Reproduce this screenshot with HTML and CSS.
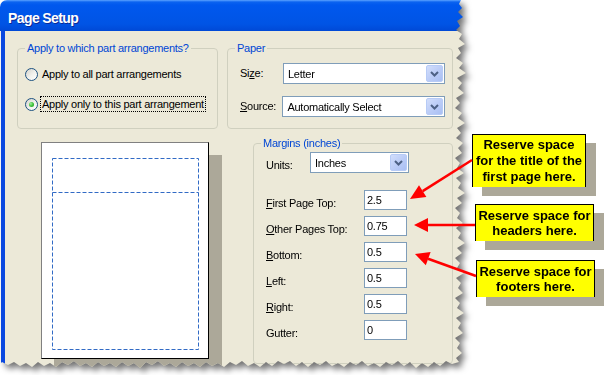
FILE: index.html
```html
<!DOCTYPE html>
<html lang="en">
<head>
  <meta charset="UTF-8" />
  <meta name="viewport" content="width=device-width, initial-scale=1.0"/>
  <title>Page Setup</title>
  <link rel="stylesheet" href="styles.css">
</head>
<body>
  <div class="shot">
    <div class="dialog-wrap">
      <div class="dialog">
        <div class="titlebar">Page Setup</div>

        <div class="dialog-body">
          <div class="top-row">
            <fieldset class="group group-apply">
              <legend>Apply to which part arrangements?</legend>
              <div class="radio-row first">
                <span class="radio"></span>
                <span class="radio-text">Apply to all part arrangements</span>
              </div>
              <div class="radio-row">
                <span class="radio checked"></span>
                <span class="radio-text focused">Apply only to this part arrangement</span>
              </div>
            </fieldset>

            <fieldset class="group group-paper">
              <legend>Paper</legend>
              <div class="field-row first">
                <span class="field-label">Si<u>z</u>e:</span>
                <div class="combo combo-size">
                  <span class="combo-value">Letter</span>
                  <span class="combo-btn"><svg width="9" height="6" viewBox="0 0 9 6"><path d="M1 1 L4.5 4.5 L8 1" /></svg></span>
                </div>
              </div>
              <div class="field-row second">
                <span class="field-label"><u>S</u>ource:</span>
                <div class="combo combo-source">
                  <span class="combo-value">Automatically Select</span>
                  <span class="combo-btn"><svg width="9" height="6" viewBox="0 0 9 6"><path d="M1 1 L4.5 4.5 L8 1" /></svg></span>
                </div>
              </div>
            </fieldset>
          </div>

          <div class="bottom-row">
            <div class="preview-page">
              <svg width="166" height="215" viewBox="0 0 166 215">
                <rect x="10.5" y="15.5" width="146" height="191" />
                <line x1="10.5" y1="49.5" x2="156.5" y2="49.5" />
              </svg>
            </div>

            <fieldset class="group group-margins">
              <legend>Margins (inches)</legend>
              <div class="units-row">
                <span class="field-label">Units:</span>
                <div class="combo combo-units">
                  <span class="combo-value">Inches</span>
                  <span class="combo-btn"><svg width="9" height="6" viewBox="0 0 9 6"><path d="M1 1 L4.5 4.5 L8 1" /></svg></span>
                </div>
              </div>
              <div class="margin-row first">
                <span class="margin-label"><u>F</u>irst Page Top:</span>
                <input class="num" type="text" value="2.5">
              </div>
              <div class="margin-row">
                <span class="margin-label"><u>O</u>ther Pages Top:</span>
                <input class="num" type="text" value="0.75">
              </div>
              <div class="margin-row">
                <span class="margin-label"><u>B</u>ottom:</span>
                <input class="num" type="text" value="0.5">
              </div>
              <div class="margin-row">
                <span class="margin-label"><u>L</u>eft:</span>
                <input class="num" type="text" value="0.5">
              </div>
              <div class="margin-row">
                <span class="margin-label"><u>R</u>ight:</span>
                <input class="num" type="text" value="0.5">
              </div>
              <div class="margin-row">
                <span class="margin-label">Gutter:</span>
                <input class="num" type="text" value="0">
              </div>
            </fieldset>
          </div>
        </div>
      </div>
    </div>

    <!-- annotation callouts -->
    <div class="callout callout-title">Reserve space<br>for the title of the<br>first page here.</div>
    <div class="callout callout-headers">Reserve space for<br>headers here.</div>
    <div class="callout callout-footers">Reserve space for<br>footers here.</div>

    <svg class="arrows" width="604" height="375" viewBox="0 0 604 375">
      <g class="arrow-lines">
        <line x1="472" y1="160" x2="422.7" y2="191.1" />
        <line x1="475" y1="225" x2="427" y2="225" />
        <line x1="476" y1="276" x2="428" y2="258.7" />
      </g>
      <g class="arrow-heads">
        <polygon points="410,199 419,185.2 426.4,197" />
        <polygon points="414,225 428,218 428,232" />
        <polygon points="415,254 430.6,252.1 425.8,265.3" />
      </g>
    </svg>
  </div>
</body>
</html>
```

FILE: styles.css
```css
body {
  margin: 0;
  background: #ffffff;
  font-family: "Liberation Sans", Arial, sans-serif;
  font-size: 11px;
  letter-spacing: -0.25px;
  color: #000;
}

.shot {
  position: relative;
  width: 604px;
  height: 375px;
  overflow: hidden;
}

/* torn screenshot edge with its shadow */
.dialog-wrap {
  width: 470px;
  filter: drop-shadow(4px 4px 3px rgba(0, 0, 0, 0.55));
}

.dialog {
  height: 375px;
  display: flex;
  flex-direction: column;
  border-top-left-radius: 7px;
  overflow: hidden;
  clip-path: polygon(
    0 0, 461px 0, 459px 4px, 462px 8px, 458px 12px, 463px 17px, 457px 21px, 460px 26px, 456px 30px,
    462px 34px, 459px 39px, 465px 44px, 458px 48px, 461px 53px, 456px 58px, 463px 63px, 459px 68px,
    466px 73px, 457px 78px, 462px 83px, 458px 88px, 464px 93px, 456px 98px, 460px 103px, 455px 108px,
    462px 113px, 458px 118px, 465px 123px, 457px 128px, 461px 133px, 456px 138px, 463px 143px,
    458px 148px, 462px 153px, 455px 158px, 460px 163px, 457px 168px, 464px 173px, 456px 178px,
    461px 183px, 458px 188px, 465px 193px, 457px 198px, 462px 203px, 455px 208px, 460px 213px,
    457px 218px, 463px 223px, 456px 228px, 461px 233px, 458px 238px, 465px 243px, 457px 248px,
    462px 253px, 455px 258px, 460px 263px, 457px 268px, 464px 273px, 456px 278px, 461px 283px,
    458px 288px, 463px 293px, 455px 298px, 460px 303px, 457px 308px, 464px 313px, 456px 318px,
    461px 323px, 458px 328px, 463px 333px, 455px 338px, 460px 343px, 457px 348px, 462px 353px,
    456px 358px, 459px 362px,
    452px 364px, 446px 361px, 440px 366px, 434px 362px, 428px 367px, 422px 363px, 416px 368px,
    410px 362px, 404px 366px, 398px 361px, 392px 365px, 386px 362px, 380px 367px, 374px 363px,
    368px 366px, 362px 361px, 356px 365px, 350px 362px, 344px 367px, 338px 363px, 332px 366px,
    326px 361px, 320px 365px, 314px 362px, 308px 367px, 302px 362px, 296px 366px, 290px 361px,
    284px 364px, 278px 361px, 272px 366px, 266px 362px, 260px 367px, 254px 363px, 248px 366px,
    242px 361px, 236px 365px, 230px 362px, 224px 367px, 218px 363px, 212px 366px, 206px 362px,
    200px 367px, 194px 363px, 188px 366px, 182px 362px, 176px 367px, 170px 363px, 164px 366px,
    158px 361px, 152px 365px, 146px 362px, 140px 368px, 134px 363px, 128px 366px, 122px 362px,
    116px 367px, 110px 363px, 104px 366px, 98px 362px, 92px 367px, 86px 363px, 80px 366px,
    74px 361px, 68px 365px, 62px 362px, 56px 367px, 50px 363px, 44px 366px, 38px 362px,
    32px 367px, 26px 363px, 20px 366px, 14px 362px, 8px 365px, 2px 362px, 0 364px
  );
}

.titlebar {
  height: 31px;
  box-sizing: border-box;
  padding: 10px 0 0 8px;
  background: linear-gradient(to bottom, #5ca3ff 0, #0b63f0 2px, #0058ee 5px, #0054e5 24px, #0049d6 31px);
  color: #fff;
  font-weight: bold;
  font-size: 14px;
  line-height: 16px;
  letter-spacing: -0.6px;
  text-shadow: 1px 1px 0 #0a2a96;
}

.dialog-body {
  flex: 1;
  margin-left: 1px;
  border-left: 4px solid #0a48e0;
  background: #ece9d8;
  padding: 11px 0 0 12px;
}

.top-row {
  display: flex;
  gap: 9px;
}

.group {
  margin: 0;
  padding: 0 7px;
  border: 1px solid #d0d0bf;
  border-radius: 4px;
  box-sizing: border-box;
  min-width: 0;
}

.group legend {
  padding: 0 2px;
  color: #0046d5;
  line-height: 13px;
}

.group-apply {
  width: 201px;
  height: 87px;
}

.group-paper {
  width: 226px;
  height: 87px;
}

/* radio buttons */
.radio-row {
  display: flex;
  align-items: center;
  height: 16px;
  margin-top: 14px;
}

.radio-row.first {
  margin-top: 11px;
}

.radio {
  position: relative;
  width: 13px;
  height: 13px;
  box-sizing: border-box;
  border: 1px solid #1c5180;
  border-radius: 50%;
  background: linear-gradient(135deg, #d4d3cc 0%, #f2f2ee 55%, #ffffff 100%);
}

.radio.checked::after {
  content: "";
  position: absolute;
  left: 3px;
  top: 3px;
  width: 5px;
  height: 5px;
  border-radius: 50%;
  background: radial-gradient(circle at 35% 35%, #a0f09c 0, #3fc13c 50%, #1e9a1c 100%);
}

.radio-text {
  margin-left: 2px;
  padding: 0 1px;
  line-height: 14px;
  border: 1px solid transparent;
}

.radio-text.focused {
  border: 1px dotted #000;
}

/* label + combo rows */
.field-row {
  display: flex;
  align-items: center;
  margin-top: 12px;
}

.field-row.first {
  margin-top: 8px;
}

.field-label {
  width: 43px;
  margin-left: 5px;
  line-height: 13px;
}

.combo {
  height: 21px;
  box-sizing: border-box;
  border: 1px solid #7f9db9;
  background: #fff;
  display: flex;
  align-items: center;
  padding: 1px;
}

.combo-size {
  width: 162px;
}

.combo-source {
  width: 165px;
}

.combo-units {
  width: 99px;
}

.combo-value {
  flex: 1;
  padding-left: 3px;
  white-space: nowrap;
  overflow: hidden;
}

.combo-btn {
  width: 17px;
  height: 17px;
  box-sizing: border-box;
  border: 1px solid #b7cbf6;
  border-radius: 2px;
  background: linear-gradient(135deg, #d2defb 0%, #bccdf7 50%, #a9bff3 100%);
  display: flex;
  align-items: center;
  justify-content: center;
}

.combo-btn path {
  fill: none;
  stroke: #4d6185;
  stroke-width: 2;
}

/* lower half */
.bottom-row {
  display: flex;
  align-items: flex-start;
  margin-top: 8px;
}

.preview-page {
  margin: 5px 0 0 24px;
  width: 168px;
  height: 217px;
  box-sizing: border-box;
  border: 1px solid;
  border-color: #808080 #000 #000 #808080;
  background: #fff;
  box-shadow: 13px 13px 0 #aca899;
}

.preview-page svg {
  display: block;
}

.preview-page rect,
.preview-page line {
  fill: none;
  stroke: #316ac5;
  stroke-width: 1;
  stroke-dasharray: 4 2;
}

.group-margins {
  margin-left: 44px;
  width: 200px;
  height: 227px;
}

.units-row {
  display: flex;
  align-items: flex-start;
  margin-top: 2px;
}

.units-row .field-label {
  width: 44px;
  padding-top: 7px;
}

.margin-row {
  display: flex;
  align-items: flex-start;
  margin-top: 6px;
}

.margin-row.first {
  margin-top: 17px;
}

.margin-label {
  width: 98px;
  margin-left: 5px;
  padding-top: 7px;
  line-height: 13px;
}

.num {
  width: 43px;
  height: 20px;
  box-sizing: border-box;
  margin: 0;
  padding: 0 2px;
  border: 1px solid #7f9db9;
  background: #fff;
  font: inherit;
  letter-spacing: inherit;
  color: #000;
  outline: none;
}

/* callouts over the screenshot */
.callout {
  position: absolute;
  box-sizing: border-box;
  background: #ffff00;
  border: 1px solid #000;
  border-bottom: none;
  box-shadow: 10px 9px 0 #aca899;
  font-weight: bold;
  font-size: 13px;
  letter-spacing: 0;
  text-align: center;
  white-space: nowrap;
  display: flex;
  align-items: center;
  justify-content: center;
}

.callout-title {
  left: 472px;
  top: 134px;
  width: 114px;
  height: 53px;
  line-height: 16px;
}

.callout-headers {
  left: 475px;
  top: 204px;
  width: 119px;
  height: 37px;
  line-height: 15px;
}

.callout-footers {
  left: 476px;
  top: 260px;
  width: 119px;
  height: 37px;
  line-height: 15px;
}

.arrows {
  position: absolute;
  left: 0;
  top: 0;
  pointer-events: none;
}

.arrow-lines line {
  stroke: #ff0000;
  stroke-width: 2.5;
}

.arrow-heads polygon {
  fill: #ff0000;
}
```
